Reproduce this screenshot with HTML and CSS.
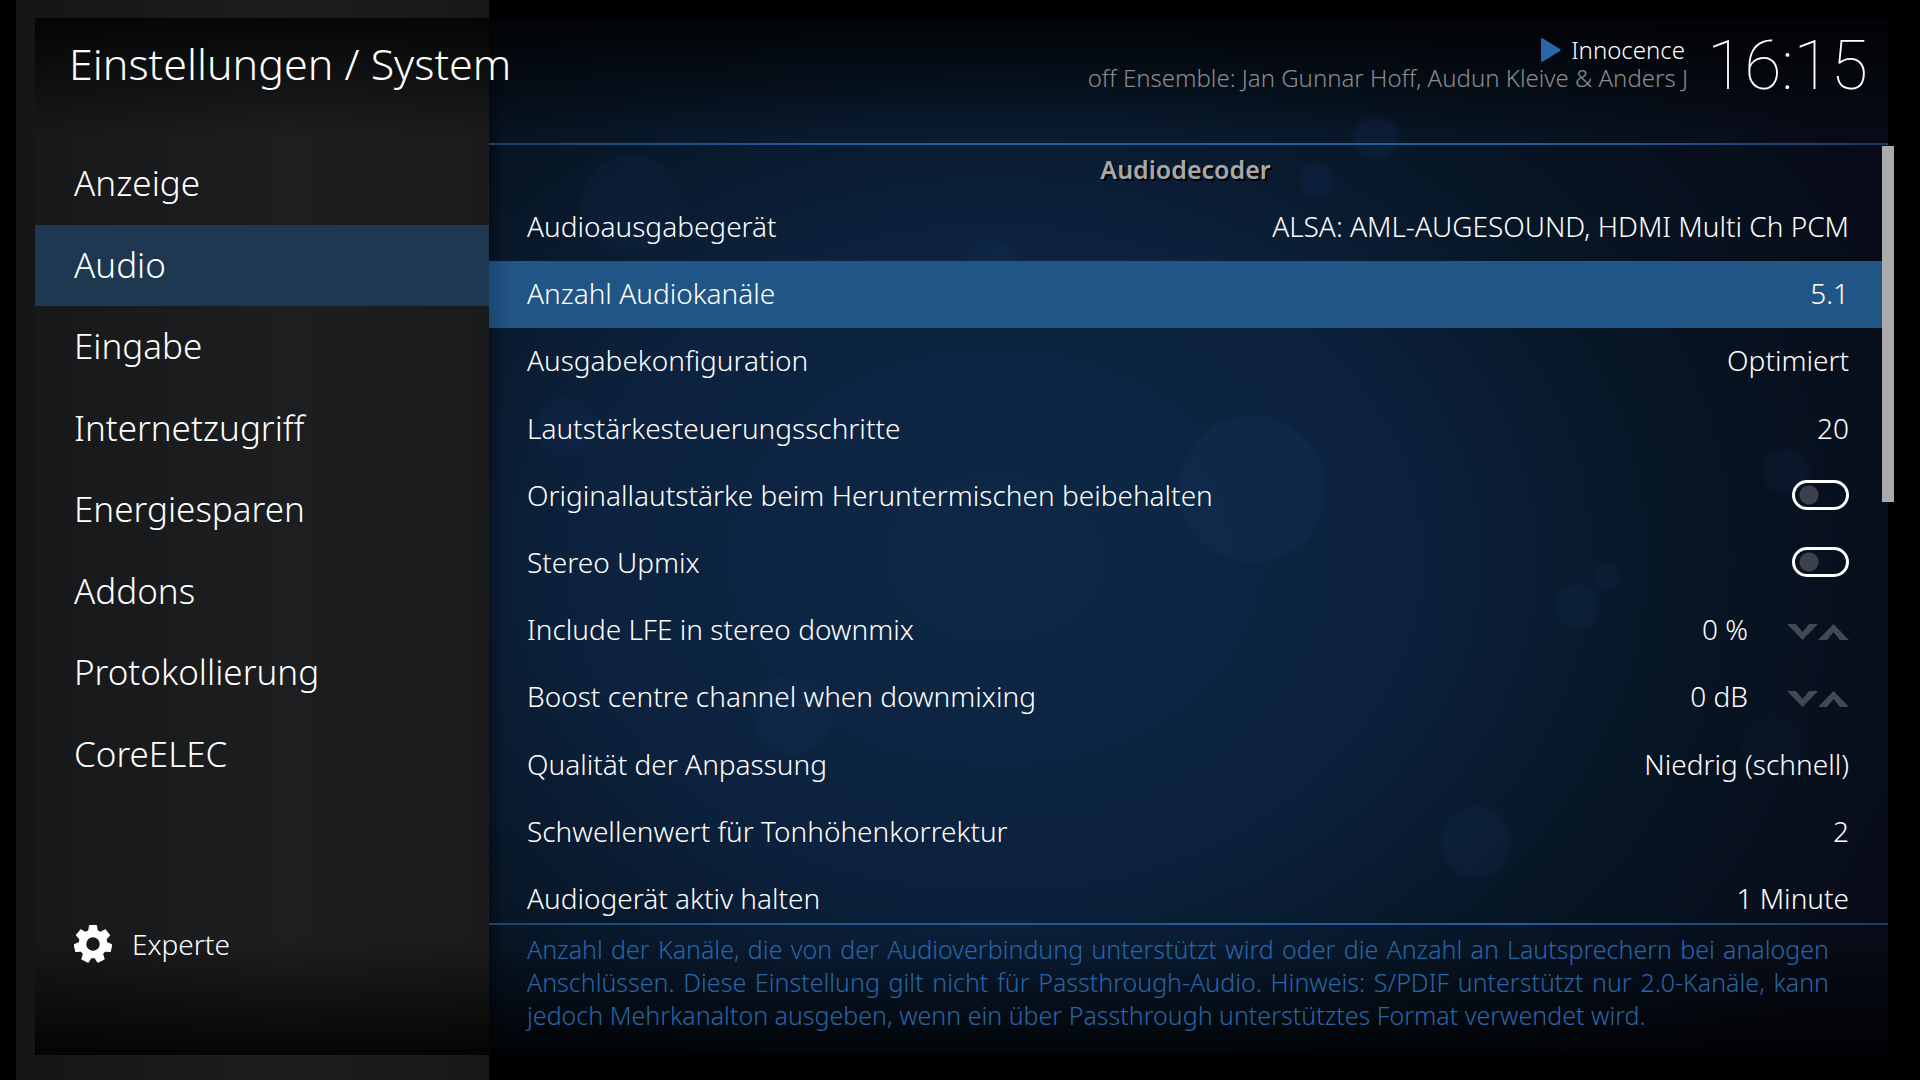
FILE: index.html
```html
<!DOCTYPE html>
<html lang="de">
<head>
<meta charset="utf-8">
<meta name="viewport" content="width=device-width, initial-scale=1">
<title>Einstellungen / System</title>
<link rel="stylesheet" href="styles.css">
</head>
<body>
<svg class="symbols" aria-hidden="true">
  <symbol id="down" viewBox="0 0 31 16"><path d="M0 0H9L15.500 8L22 0H31L15.500 16Z" fill="currentColor"/></symbol>
  <symbol id="up" viewBox="0 0 31 16"><path d="M0 16H9L15.500 8L22 16H31L15.500 0Z" fill="currentColor"/></symbol>
</svg>
<div class="app">
  <div class="stage">
    <header class="topbar">
      <h1 class="title">Einstellungen / System</h1>
      <div class="playing">
        <div class="track"><svg class="play" viewBox="0 0 20 24" aria-hidden="true"><path d="M1 0Q0 0 0 1V23Q0 24 1 24L2 23.500L19 13Q20 12 19 11L2 .5Z" fill="#2a67a8"/></svg><span>Innocence</span></div>
        <div class="artist">off Ensemble: Jan Gunnar Hoff, Audun Kleive &amp; Anders J</div>
      </div>
      <time class="clock">16:15</time>
    </header>

    <aside class="sidebar">
      <nav class="nav">
        <a href="#anzeige">Anzeige</a>
        <a href="#audio" class="active" aria-current="page">Audio</a>
        <a href="#eingabe">Eingabe</a>
        <a href="#internetzugriff">Internetzugriff</a>
        <a href="#energiesparen">Energiesparen</a>
        <a href="#addons">Addons</a>
        <a href="#protokollierung">Protokollierung</a>
        <a href="#coreelec">CoreELEC</a>
      </nav>
      <button class="level" type="button">
        <svg class="gear" viewBox="-19 -19 38 38" aria-hidden="true">
          <g fill="#fff">
            <path id="tooth" d="M-3.500 -18.500H3.500L4.500 -12H-4.500Z" stroke="#fff" stroke-width="1" stroke-linejoin="round"/>
            <use href="#tooth" transform="rotate(51.430)"/>
            <use href="#tooth" transform="rotate(102.860)"/>
            <use href="#tooth" transform="rotate(154.290)"/>
            <use href="#tooth" transform="rotate(205.710)"/>
            <use href="#tooth" transform="rotate(257.140)"/>
            <use href="#tooth" transform="rotate(308.570)"/>
          </g>
          <circle r="10.500" fill="none" stroke="#fff" stroke-width="7.500"/>
        </svg>
        <span>Experte</span>
      </button>
    </aside>

    <main class="panel">
      <div class="list">
        <h2 class="group">Audiodecoder</h2>
        <ul class="rows">
          <li><button class="row" type="button"><span>Audioausgabegerät</span><span>ALSA: AML-AUGESOUND, HDMI Multi Ch PCM</span></button></li>
          <li><button class="row focused" type="button"><span>Anzahl Audiokanäle</span><span>5.1</span></button></li>
          <li><button class="row" type="button"><span>Ausgabekonfiguration</span><span>Optimiert</span></button></li>
          <li><button class="row" type="button"><span>Lautstärkesteuerungsschritte</span><span>20</span></button></li>
          <li><label class="row"><span>Originallautstärke beim Heruntermischen beibehalten</span><input class="toggle" type="checkbox"></label></li>
          <li><label class="row"><span>Stereo Upmix</span><input class="toggle" type="checkbox"></label></li>
          <li><div class="row"><span>Include LFE in stereo downmix</span><span class="stepper"><output>0 %</output><button type="button" aria-label="Verringern"><svg><use href="#down"/></svg></button><button type="button" aria-label="Erhöhen"><svg><use href="#up"/></svg></button></span></div></li>
          <li><div class="row"><span>Boost centre channel when downmixing</span><span class="stepper"><output>0 dB</output><button type="button" aria-label="Verringern"><svg><use href="#down"/></svg></button><button type="button" aria-label="Erhöhen"><svg><use href="#up"/></svg></button></span></div></li>
          <li><button class="row" type="button"><span>Qualität der Anpassung</span><span>Niedrig (schnell)</span></button></li>
          <li><button class="row" type="button"><span>Schwellenwert für Tonhöhenkorrektur</span><span>2</span></button></li>
          <li><button class="row" type="button"><span>Audiogerät aktiv halten</span><span>1 Minute</span></button></li>
        </ul>
      </div>
      <div class="scrollbar"></div>
    </main>

    <footer class="help">
      <p>Anzahl der Kanäle, die von der Audioverbindung unterstützt wird oder die Anzahl an Lautsprechern bei analogen Anschlüssen. Diese Einstellung gilt nicht für Passthrough-Audio. Hinweis: S/PDIF unterstützt nur 2.0-Kanäle, kann jedoch Mehrkanalton ausgeben, wenn ein über Passthrough unterstütztes Format verwendet wird.</p>
    </footer>
  </div>
</div>
</body>
</html>
```
FILE: styles.css
```css
* { box-sizing: border-box; margin: 0; padding: 0; }

body {
  background: #000;
  color: #fff;
  font-family: "Noto Sans", sans-serif;
  font-weight: 300;
}

button {
  background: none;
  border: 0;
  color: inherit;
  font: inherit;
  cursor: pointer;
}

a { color: inherit; text-decoration: none; }
.symbols { display: none; }

/* The side panel runs the full window height behind the framed stage. */
.app {
  height: 100vh;
  padding: 18px 32px 25px 35px;
  background:
    linear-gradient(90deg, #151515, #1d1d1d 55%, #181818) 16px 0 / 473px 100% no-repeat,
    #000;
}

.stage {
  height: 100%;
  display: grid;
  grid-template-columns: 454px minmax(0, 1fr);
  grid-template-rows: 125px minmax(0, 1fr) 132px;
  background:
    linear-gradient(rgba(0, 0, 0, .8), rgba(0, 0, 0, .4) 60px, transparent 120px),
    linear-gradient(0deg, rgba(0, 0, 0, .82), rgba(0, 0, 0, .45) 50px, transparent 115px),
    linear-gradient(90deg, rgba(0, 0, 0, .35), transparent) 454px 0 / 16px 100% no-repeat,
    radial-gradient(circle at 1217px 471px, rgba(30, 70, 130, .13) 72px, transparent 75px),
    radial-gradient(circle at 596px 186px, rgba(30, 50, 100, .12) 46px, transparent 53px),
    radial-gradient(circle at 956px 248px, rgba(30, 60, 120, .13) 24px, transparent 31px),
    radial-gradient(circle at 530px 409px, rgba(30, 60, 120, .12) 25px, transparent 33px),
    radial-gradient(circle at 757px 696px, rgba(30, 60, 120, .12) 36px, transparent 43px),
    radial-gradient(circle at 1341px 120px, rgba(30, 60, 130, .16) 18px, transparent 27px),
    radial-gradient(circle at 1282px 162px, rgba(30, 60, 130, .14) 12px, transparent 20px),
    radial-gradient(circle at 1441px 824px, rgba(30, 60, 110, .16) 31px, transparent 39px),
    radial-gradient(circle at 1542px 588px, rgba(30, 60, 110, .16) 18px, transparent 26px),
    radial-gradient(circle at 1571px 560px, rgba(30, 60, 110, .15) 9px, transparent 16px),
    radial-gradient(circle at 1751px 453px, rgba(30, 50, 100, .15) 18px, transparent 27px),
    radial-gradient(circle at 1737px 728px, rgba(30, 50, 100, .1) 24px, transparent 36px),
    linear-gradient(90deg, #17181a, #1d1e20 55%, #1a1b1c) 0 0 / 454px 100% no-repeat,
    radial-gradient(ellipse 1000px 780px at 960px 540px, #0d2847, #0c223e 40%, #071524 70%, #080b17);
}

.topbar {
  grid-column: 1 / -1;
  display: flex;
  padding: 16px 20px 0 34px;
}

.title {
  flex: 1;
  font-size: 43px;
  line-height: 60px;
  font-weight: 300;
}

.playing {
  padding: 2px 19px 0 0;
  font-size: 24px;
  line-height: 28px;
  text-align: right;
}

.track {
  display: flex;
  justify-content: flex-end;
  align-items: center;
  gap: 10px;
  padding-right: 3px;
}

.play { width: 20px; height: 24px; }
.artist { color: #8a8c8e; }

.clock {
  font-family: Roboto, sans-serif;
  font-weight: 100;
  font-size: 68px;
  line-height: 64px;
}

.sidebar {
  grid-row: 2 / 4;
  display: flex;
  flex-direction: column;
  justify-content: space-between;
  align-items: stretch;
  padding-bottom: 92px;
}

.nav {
  height: 652px;
  display: flex;
  flex-direction: column;
  font-size: 35px;
}

.nav a {
  flex: 1;
  display: flex;
  align-items: center;
  padding: 0 0 2px 39px;
}

.nav .active { background: #1e3852; }

.level {
  display: flex;
  align-items: center;
  gap: 20px;
  padding-left: 39px;
  font-size: 28px;
  line-height: 38px;
}

.gear { width: 38px; height: 38px; }

.panel {
  display: grid;
  grid-template-columns: minmax(0, 1fr) 12px;
  grid-template-rows: 2px minmax(0, 1fr);
  margin-right: -6px;
}

.panel::before,
.help::before {
  content: "";
  display: block;
  height: 2px;
  background: linear-gradient(90deg, #1d426b, #215c9c 25%, #215c9c 75%, #1a3b62);
}

.panel::before {
  grid-column: 1 / -1;
  margin-right: 6px;
}

.list { overflow: hidden; }

.group {
  height: 49px;
  font-size: 25px;
  line-height: 48px;
  font-weight: 600;
  text-align: center;
  color: #a8a8a8;
  text-shadow: 2px 2px 0 #000;
}

.rows {
  height: 739px;
  display: flex;
  flex-direction: column;
  list-style: none;
  font-size: 28px;
}

.rows li { flex: 1; display: flex; }

.row {
  flex: 1;
  display: flex;
  justify-content: space-between;
  align-items: center;
  padding: 0 33px 3px 38px;
}

.focused { background: linear-gradient(90deg, #1c4772, #215586 24px); }

.toggle {
  appearance: none;
  width: 57px;
  height: 30px;
  border: 3px solid #fff;
  border-radius: 15px;
  background: radial-gradient(circle at 14px 12px, #3c414c 9px, transparent 10px);
}

.stepper { display: flex; align-items: center; }
.stepper output { padding-right: 39px; }
.stepper button { color: #434852; line-height: 0; padding-top: 6px; }
.stepper svg { width: 31px; height: 16px; }

.scrollbar {
  height: 356px;
  margin-top: 1px;
  background: #aaa;
}

.help { grid-column: 2; }

.help p {
  padding: 8px 59px 0 38px;
  font-size: 25px;
  line-height: 33px;
  text-align: justify;
  color: #2766a8;
}
```
